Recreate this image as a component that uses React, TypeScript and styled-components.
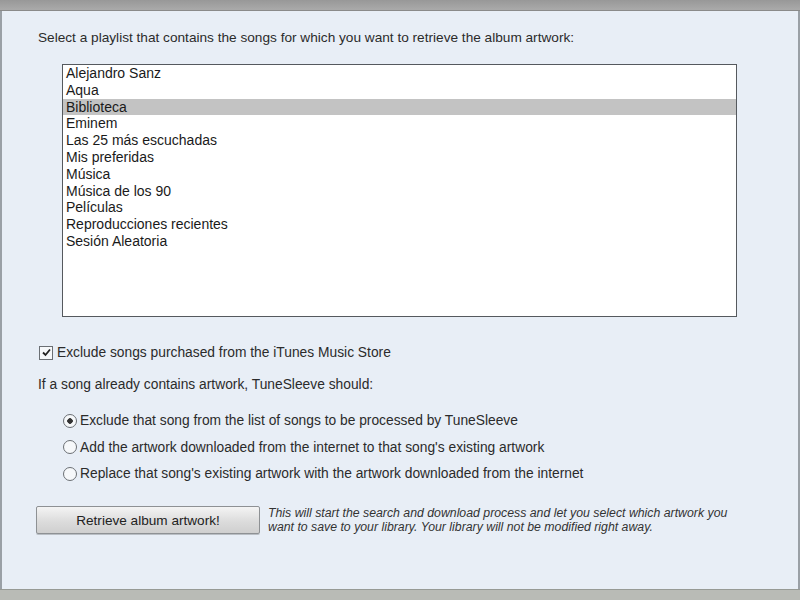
import styled, { createGlobalStyle } from "styled-components"

const GlobalStyle = createGlobalStyle`
  html, body {
    margin: 0;
    padding: 0;
    width: 800px;
    height: 600px;
    overflow: hidden;
    background: #b9bbb6;
    font-family: "Liberation Sans", Arial, sans-serif;
  }
`

const PLAYLISTS = [
  "Alejandro Sanz",
  "Aqua",
  "Biblioteca",
  "Eminem",
  "Las 25 más escuchadas",
  "Mis preferidas",
  "Música",
  "Música de los 90",
  "Películas",
  "Reproducciones recientes",
  "Sesión Aleatoria",
]

const OPTIONS = [
  "Exclude that song from the list of songs to be processed by TuneSleeve",
  "Add the artwork downloaded from the internet to that song's existing artwork",
  "Replace that song's existing artwork with the artwork downloaded from the internet",
]

const App = () => {
  return (
    <Window>
      <GlobalStyle />
      <TopBar />
      <Panel>
        <Label>Select a playlist that contains the songs for which you want to retrieve the album artwork:</Label>
        <ListBox>
          {PLAYLISTS.map((p) => (
            <ListItem key={p} $selected={p === "Biblioteca"}>{p}</ListItem>
          ))}
        </ListBox>
        <CheckRow>
          <CheckBox>
            <svg width="11" height="11" viewBox="0 0 11 11">
              <path d="M2 5.5 L4.5 8 L9 2.5" fill="none" stroke="#222" strokeWidth="1.8" />
            </svg>
          </CheckBox>
          <span>Exclude songs purchased from the iTunes Music Store</span>
        </CheckRow>
        <Question>If a song already contains artwork, TuneSleeve should:</Question>
        <RadioGroup>
          {OPTIONS.map((o, i) => (
            <RadioRow key={o}>
              <Radio $checked={i === 0} />
              <span>{o}</span>
            </RadioRow>
          ))}
        </RadioGroup>
        <ActionRow>
          <Button>Retrieve album artwork!</Button>
          <Hint>
            This will start the search and download process and let you select which artwork you
            <br />
            want to save to your library. Your library will not be modified right away.
          </Hint>
        </ActionRow>
      </Panel>
      <BottomBar />
    </Window>
  )
}

export default App

const Window = styled.div`
  width: 800px;
  height: 600px;
  display: flex;
  flex-direction: column;
`
const TopBar = styled.div`
  height: 10px;
  background: linear-gradient(#989898, #aaaaaa);
  border-bottom: 1px solid #8a8a8a;
`
const Panel = styled.div`
  flex: 1;
  background: #e8eef6;
  border-left: 2px solid #9aa0a6;
  border-right: 2px solid #9aa0a6;
  padding: 21px 0 0 36px;
  color: #2b2b2b;
  font-size: 13.8px;
  display: flex;
  flex-direction: column;
`
const Label = styled.div`
  height: 12px;
  line-height: 12px;
  font-size: 13.65px;
`
const ListBox = styled.div`
  margin: 20px 0 0 24px;
  width: 673px;
  height: 251px;
  background: #fff;
  border: 1px solid #55595e;
  color: #1a1a1a;
  font-size: 14px;
`
const ListItem = styled.div<{ $selected?: boolean }>`
  height: 16.8px;
  line-height: 17px;
  padding-left: 3px;
  background: ${(p) => (p.$selected ? "#c3c3c3" : "transparent")};
`
const CheckRow = styled.div`
  display: flex;
  align-items: center;
  gap: 4px;
  margin: 28px 0 0 1px;
  height: 15px;
`
const CheckBox = styled.div`
  width: 12px;
  height: 12px;
  border: 1px solid #6b6f74;
  background: #f6f8fa;
  display: flex;
  align-items: center;
  justify-content: center;
`
const Question = styled.div`
  margin: 17px 0 0 0;
  height: 15px;
  line-height: 15px;
`
const RadioGroup = styled.div`
  display: flex;
  flex-direction: column;
  gap: 11.5px;
  margin: 21px 0 0 25px;
`
const RadioRow = styled.div`
  display: flex;
  align-items: center;
  gap: 3px;
  height: 15px;
`
const Radio = styled.div<{ $checked?: boolean }>`
  width: 12px;
  height: 12px;
  border-radius: 50%;
  border: 1px solid #6b6f74;
  background: ${(p) =>
    p.$checked
      ? "radial-gradient(circle, #333 0 2.5px, #f6f8fa 3px)"
      : "#f6f8fa"};
`
const ActionRow = styled.div`
  display: flex;
  align-items: flex-start;
  gap: 8px;
  margin: 25px 0 0 -2px;
`
const Button = styled.div`
  width: 222px;
  height: 26px;
  border: 1px solid #8e9194;
  border-radius: 2px;
  background: linear-gradient(#f4f4f4, #dcdcdc 55%, #cfcfcf);
  display: flex;
  align-items: center;
  justify-content: center;
  font-size: 13.6px;
  color: #222;
  box-shadow: 0 1px 0 #b9bec4;
`
const Hint = styled.div`
  font-size: 12.3px;
  font-style: italic;
  line-height: 14px;
  color: #333;
`
const BottomBar = styled.div`
  height: 10px;
  background: #b9bbb6;
  border-top: 1px solid #979a95;
`
